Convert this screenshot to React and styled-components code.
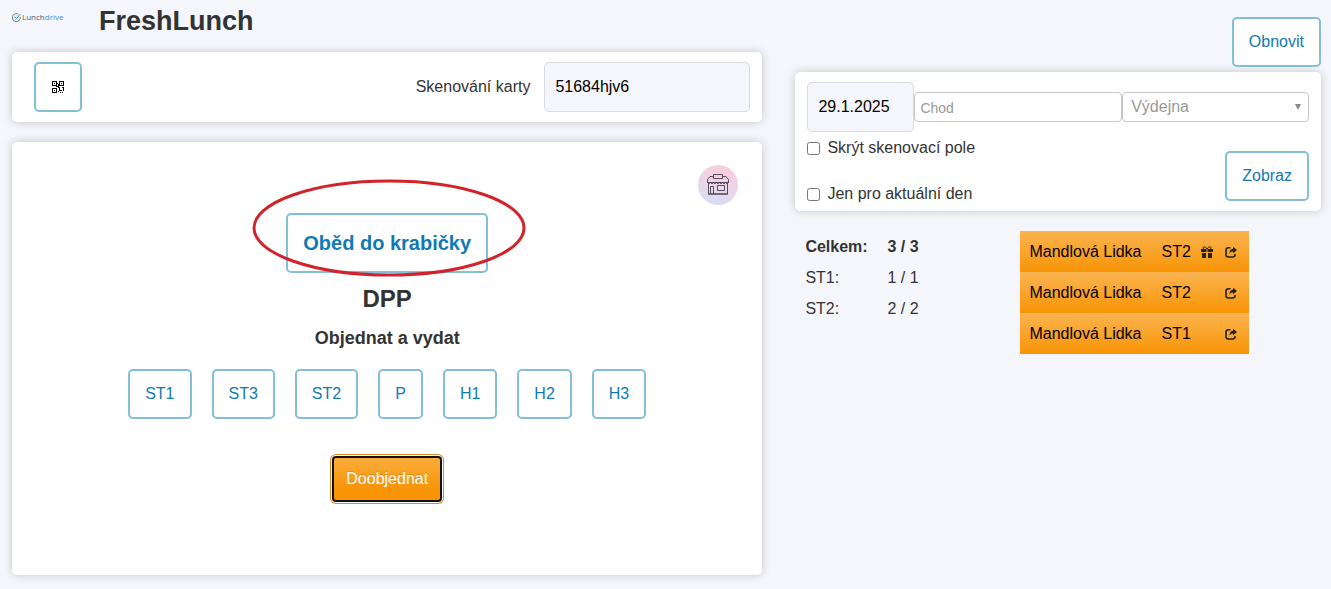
import React from "react";
import styled, { createGlobalStyle, css } from "styled-components";

const GlobalStyle = createGlobalStyle`
  *, *::before, *::after { box-sizing: border-box; }
  body {
    margin: 0;
    background: #f4f6fb;
    color: #333;
    font: 16px/20px "Liberation Sans", Arial, sans-serif;
  }
  button, input, select { font: inherit; margin: 0; }
`;

const Page = styled.div`
  display: grid;
  grid-template-columns: 751fr 526fr;
  column-gap: 33px;
  padding: 0 10px 14px 12px;
`;

const Column = styled.div`
  min-width: 0;
`;

const Header = styled.header`
  display: flex;
  gap: 37px;
  height: 52px;
`;

const Logo = styled.a`
  display: flex;
  align-items: center;
  gap: 1px;
  width: 50px;
  height: 12px;
  margin-top: 11px;
  color: #555a60;
  font: 8px/12px "Open Sans", "Noto Sans", sans-serif;
  text-decoration: none;
  svg { flex: none; }
  span span { color: #3f95c2; }
`;

const Title = styled.h1`
  margin: 0;
  font-size: 27px;
  line-height: 42px;
`;

const Card = styled.section`
  background: #fff;
  border-radius: 5px;
  box-shadow: 0 0 10px rgba(0, 0, 0, 0.2);
`;

const ScanCard = styled(Card)`
  display: flex;
  align-items: center;
  justify-content: space-between;
  padding: 10px 12px 10px 22px;
`;

const OrderCard = styled(Card)`
  display: flex;
  flex-direction: column;
  align-items: center;
  margin-top: 20px;
  padding: 23px 24px 71px;
`;

const field = css`
  height: 50px;
  padding: 0 10px;
  border: 1px solid #d9dbe0;
  border-radius: 5px;
  background: #f4f6fb;
  color: #000;
`;

const ScanLabel = styled.label`
  display: flex;
  align-items: center;
  gap: 14px;
`;

const ScanInput = styled.input`
  ${field}
  width: 206px;
`;

const Button = styled.button`
  height: ${(p) => (p.$large ? 60 : 50)}px;
  padding: 0 15px;
  border: 2px solid #84bfd8;
  border-radius: 5px;
  background: #fff;
  color: #0f7ab3;
  font-size: ${(p) => (p.$large ? 20 : 16)}px;
  font-weight: ${(p) => (p.$large ? 700 : 400)};
  line-height: 20px;
  cursor: pointer;
`;

const IconButton = styled(Button)`
  display: flex;
  align-items: center;
  justify-content: center;
  width: 48px;
  padding: 0;
  color: #000;
`;

const PrimaryButton = styled.button`
  height: 46px;
  margin: 37px 2px 2px;
  padding: 0 12px;
  border: 2px solid #111;
  border-radius: 4px;
  background: linear-gradient(#fbac3c, #f89406 75%);
  box-shadow: 0 0 0 1px #fff, 0 0 0 2px #d98a2b;
  color: #fff;
  text-shadow: 0 -1px 0 rgba(0, 0, 0, 0.15);
  cursor: pointer;
`;

const Store = styled.div`
  display: flex;
  align-items: center;
  justify-content: center;
  align-self: flex-end;
  width: 40px;
  height: 40px;
  border-radius: 50%;
  background: linear-gradient(200deg, #f8cfdf 15%, #e9d6e9 55%, #cfe0f6);
`;

const Highlighted = styled.div`
  position: relative;
  margin-top: 8px;
`;

const Ellipse = styled.svg`
  position: absolute;
  top: -34px;
  left: 50%;
  margin-left: -135px;
  overflow: visible;
  pointer-events: none;
`;

const MealTitle = styled.h2`
  margin: 6px 0 0;
  font-size: 24px;
  line-height: 40px;
`;

const MealAction = styled.h3`
  margin: 9px 0 21px;
  font-size: 18px;
  line-height: 20px;
`;

const Meals = styled.div`
  display: flex;
  flex-wrap: wrap;
  justify-content: center;
  gap: 20px;
`;

const Refresh = styled.div`
  display: flex;
  justify-content: flex-end;
  padding: 17px 0 5px;
`;

const FilterCard = styled(Card)`
  padding: 10px 12px 7px;
`;

const Filters = styled.div`
  display: grid;
  grid-template-columns: 107px minmax(0, 208fr) minmax(0, 187fr);
  align-items: center;
`;

const DateInput = styled.input`
  ${field}
  width: 100%;
`;

const CourseInput = styled.input`
  width: 100%;
  height: 30px;
  padding: 2px 5px 0;
  border: 1px solid #c6c6c6;
  border-radius: 4px;
  background: #fff;
  font-size: 14px;
  &::placeholder { color: #999; }
`;

const SelectBox = styled.div`
  display: grid;
  align-items: center;
  > * { grid-area: 1 / 1; }
  svg { justify-self: end; margin-right: 7px; pointer-events: none; }
`;

const Select = styled.select`
  width: 100%;
  height: 30px;
  padding: 0 8px;
  border: 1px solid #c6c6c6;
  border-radius: 4px;
  appearance: none;
  background: #fff;
  color: #999;
`;

const Options = styled.div`
  display: flex;
  align-items: flex-start;
  justify-content: space-between;
`;

const Checks = styled.div`
  display: grid;
  gap: 26px;
  padding-top: 6px;
`;

const Check = styled.label`
  display: flex;
  align-items: center;
  gap: 7px;
  input { width: 13px; height: 13px; }
`;

const OptionButton = styled(Button)`
  margin-top: 19px;
`;

const Results = styled.div`
  display: flex;
  align-items: flex-start;
  padding: 20px 0 0 10px;
`;

const Summary = styled.table`
  width: 215px;
  border-collapse: collapse;
  th, td { height: 31px; padding: 0; text-align: left; font-weight: 400; }
  th { width: 82px; }
  tr:first-child > * { font-weight: 700; }
`;

const Orders = styled.table`
  border-collapse: collapse;
  color: #000;
  tr { background: linear-gradient(#fbb450, #f89406); }
  td { height: 41px; padding: 0 0 0 9px; }
  td + td { padding-left: 20px; }
  td + td + td { width: 24px; padding: 0 0 0 10px; }
  td:last-child { width: 34px; }
  svg { display: block; }
`;

const QrIcon = () => (
  <svg width="12" height="12" viewBox="0 0 12 12" shapeRendering="crispEdges" fill="currentColor" aria-hidden="true">
    <path fillRule="evenodd" d="M0 0h5v5H0zM1 1v3h3V1zM7 0h5v5H7zM8 1v3h3V1zM0 7h5v5H0zM1 8v3h3V8z" />
    <path d="M2 2h1v1H2zM9 2h1v1H9zM2 9h1v1H2zM5 2h1v1H5zM6 3h1v3H6zM4 5h2v1H4zM6 6h2v1H6zM7 7h1v3H7zM8 9h2v1H8zM10 6h2v1h-2zM11 7h1v3h-1zM6 10h1v1H6zM8 11h1v1H8zM10 11h1v1h-1z" />
  </svg>
);

const LogoIcon = () => (
  <svg width="9" height="9" viewBox="0 0 18 18" fill="none" strokeWidth="2" aria-hidden="true">
    <path d="M13 2.5A8 8 0 1 0 16.5 8" stroke="#6d7f8b" />
    <circle cx="9" cy="9.500" r="4.500" stroke="#9cc8de" strokeWidth="1" />
    <path d="M6 8l3 3 8-9" stroke="#3f95c2" />
  </svg>
);

const StoreIcon = () => (
  <svg width="24" height="24" viewBox="0 0 24 24" fill="none" stroke="#4b3c4c" aria-hidden="true">
    <path d="M7.500 1.500h9v4h-9zM7 3.500H4L1.500 6.500v3h21v-3L20 3.500H17" strokeWidth="0.900" />
    <path d="M1.500 9.500q1.500 2.500 3 0q1.500 2.500 3 0q1.500 2.500 3 0q1.500 2.500 3 0q1.500 2.500 3 0q1.500 2.500 3 0q1.500 2.500 3 0" />
    <path d="M2.500 11v10h19V11M4.500 21v-7.500h3V21M11.500 12.500h7v5h-7z" strokeWidth="0.900" />
    <path d="M2 21h20" />
  </svg>
);

const GiftIcon = () => (
  <svg width="12" height="12" viewBox="0 0 12 12" aria-label="Dárek" role="img">
    <g fill="#222">
      <path d="M0 3h5v3H0zM7 3h5v3H7zM1 7h4v5H1zM7 7h4v5H7z" />
      <path d="M5.500 3h1v3h-1z" />
    </g>
    <path d="M6 3Q4.500.5 2.800.8Q1.500 1.500 2.500 3M6 3Q7.500.5 9.200.8Q10.500 1.500 9.500 3" fill="none" stroke="#222" />
  </svg>
);

const ShareIcon = () => (
  <svg width="12" height="12" viewBox="0 0 12 12" aria-label="Předat" role="img">
    <path d="M5.500 1.800H3.500Q1 1.800 1 4.300V8.500Q1 11 3.500 11h4Q10 11 10 9V8" fill="none" stroke="#222" strokeWidth="1.600" />
    <path d="M8 .8L12 4 8 7.200V5.400Q5.500 5.300 4.500 7.500Q4.300 3.300 8 2.700z" fill="#222" />
  </svg>
);

const MEALS = ["ST1", "ST3", "ST2", "P", "H1", "H2", "H3"];

const SUMMARY = [
  ["Celkem:", "3 / 3"],
  ["ST1:", "1 / 1"],
  ["ST2:", "2 / 2"],
];

const ORDERS = [
  { name: "Mandlová Lidka", meal: "ST2", gift: true },
  { name: "Mandlová Lidka", meal: "ST2" },
  { name: "Mandlová Lidka", meal: "ST1" },
];

export default function App() {
  return (
    <>
      <GlobalStyle />
      <Page>
        <Column>
          <Header>
            <Logo href="#">
              <LogoIcon />
              <span>Lunch<span>drive</span></span>
            </Logo>
            <Title>FreshLunch</Title>
          </Header>
          <ScanCard>
            <IconButton type="button" aria-label="QR kód">
              <QrIcon />
            </IconButton>
            <ScanLabel>
              Skenování karty
              <ScanInput type="text" defaultValue="51684hjv6" />
            </ScanLabel>
          </ScanCard>
          <OrderCard>
            <Store>
              <StoreIcon />
            </Store>
            <Highlighted>
              <Button type="button" $large>Oběd do krabičky</Button>
              <Ellipse width="270" height="98" viewBox="0 0 270 98" aria-hidden="true">
                <ellipse cx="137" cy="49" rx="135" ry="47" fill="none" stroke="#d2232a" strokeWidth="3" />
              </Ellipse>
            </Highlighted>
            <MealTitle>DPP</MealTitle>
            <MealAction>Objednat a vydat</MealAction>
            <Meals>
              {MEALS.map((meal) => (
                <Button type="button" key={meal}>{meal}</Button>
              ))}
            </Meals>
            <PrimaryButton type="button">Doobjednat</PrimaryButton>
          </OrderCard>
        </Column>
        <Column>
          <Refresh>
            <Button type="button">Obnovit</Button>
          </Refresh>
          <FilterCard>
            <Filters>
              <DateInput type="text" aria-label="Datum" defaultValue="29.1.2025" />
              <CourseInput type="text" aria-label="Chod" placeholder="Chod" />
              <SelectBox>
                <Select aria-label="Výdejna" defaultValue="">
                  <option value="">Výdejna</option>
                </Select>
                <svg width="8" height="6" viewBox="0 0 8 6" aria-hidden="true">
                  <path d="M1 0h6L4 6z" fill="#888" />
                </svg>
              </SelectBox>
            </Filters>
            <Options>
              <Checks>
                <Check><input type="checkbox" />Skrýt skenovací pole</Check>
                <Check><input type="checkbox" />Jen pro aktuální den</Check>
              </Checks>
              <OptionButton type="button">Zobraz</OptionButton>
            </Options>
          </FilterCard>
          <Results>
            <Summary>
              <tbody>
                {SUMMARY.map(([label, count]) => (
                  <tr key={label}>
                    <th scope="row">{label}</th>
                    <td>{count}</td>
                  </tr>
                ))}
              </tbody>
            </Summary>
            <Orders>
              <tbody>
                {ORDERS.map((order, i) => (
                  <tr key={i}>
                    <td>{order.name}</td>
                    <td>{order.meal}</td>
                    <td>{order.gift && <GiftIcon />}</td>
                    <td><ShareIcon /></td>
                  </tr>
                ))}
              </tbody>
            </Orders>
          </Results>
        </Column>
      </Page>
    </>
  );
}
